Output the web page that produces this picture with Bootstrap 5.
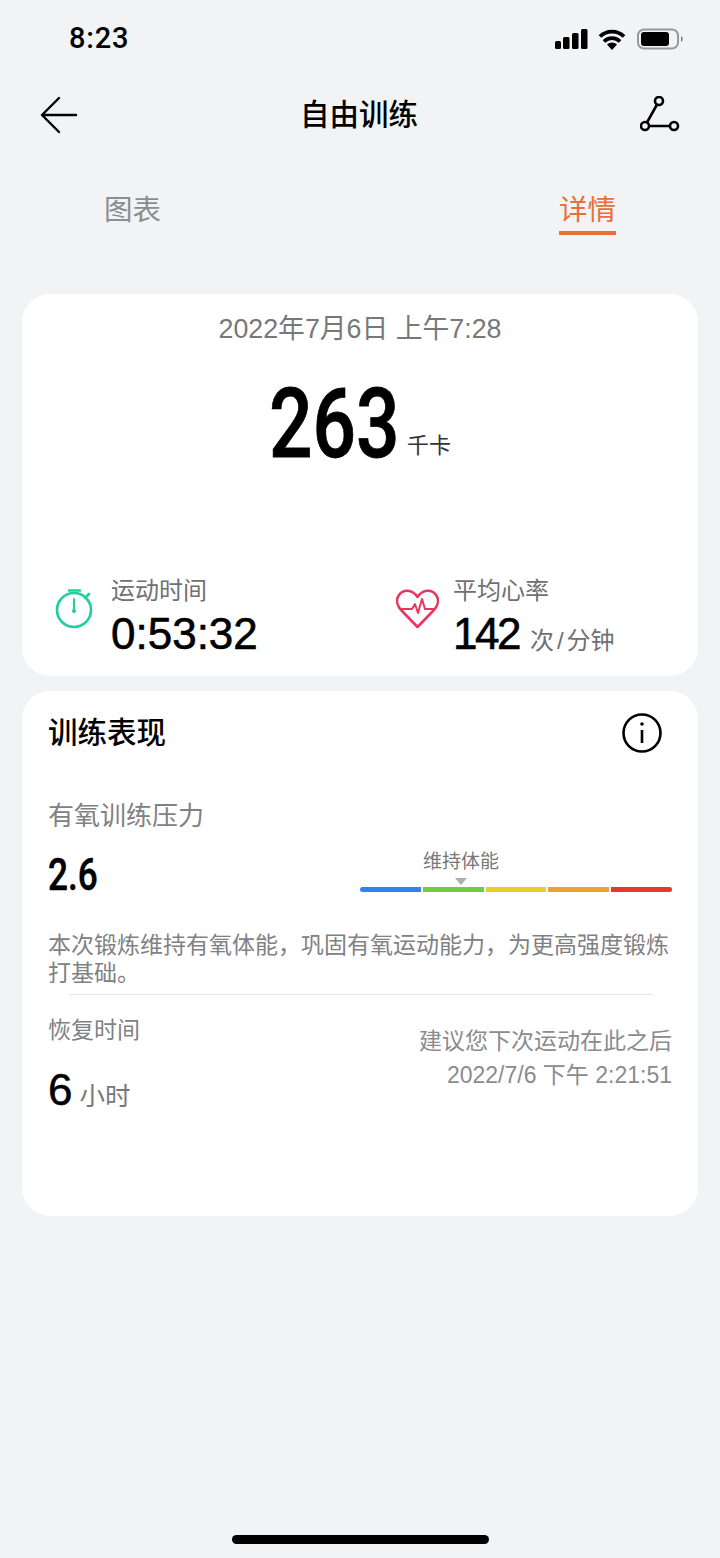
<!DOCTYPE html>
<html lang="zh-CN">
<head>
    <meta charset="UTF-8">
    <meta name="viewport" content="width=device-width, initial-scale=1.0">
    <title>自由训练</title>
    <link href="https://cdn.jsdelivr.net/npm/bootstrap@5.3.0/dist/css/bootstrap.min.css" rel="stylesheet">
    <style>
        body {
            background-color: #f1f3f5;
            font-family: "Liberation Sans", "Noto Sans CJK SC", sans-serif;
            color: #000;
            width: 720px;
            height: 1558px;
            overflow: hidden;
        }
        .status-row { height: 78px; padding: 0 36px 0 69px; }
        .status-time { font-size: 29px; font-weight: 500; letter-spacing: 0.8px; font-family: Roboto, sans-serif; }
        .title-row { height: 74px; padding: 0 40px; }
        .page-title { font-size: 29.500px; font-weight: 500; line-height: 1; }
        .tab-row { height: 68px; padding: 0 104px; margin-top: 38px; }
        .tab-link { font-size: 28.500px; line-height: 40px; color: #8c8d8f; display: block; }
        .tab-link.on { color: #e8703a; border-bottom: 4px solid #e8703a; padding-bottom: 1px; }
        .sheet { margin: 0 22px; background: #fff; border-radius: 28px; }
        .sheet-top { height: 382px; margin-top: 36px; padding-top: 17px; }
        .sheet-low { height: 525px; margin-top: 15px; padding: 22px 26px 0 26px; }
        .date-line { font-size: 26.800px; line-height: 36px; color: #77787a; }
        .big-row { margin-top: 27px; }
        .big-num { display: inline-block; width: 130px; font-family: Roboto, sans-serif; font-size: 97px; font-weight: 500; line-height: 100px; -webkit-text-stroke: .8px #000; transform: scaleX(.79); transform-origin: left center; }
        .big-unit { font-size: 22px; line-height: 24px; color: #333; margin: 0 0 16px 8px; }
        .stat-row { margin-top: 100px; padding-left: 32px; }
        .first-cell { width: 342px; flex-shrink: 0; gap: 17px; }
        .second-cell { gap: 14px; }
        .stat-ico { margin-top: 15px; }
        .stat-name { font-size: 24px; line-height: 34px; color: #6f7072; }
        .stat-val { height: 52px; font-size: 44px; line-height: 52px; -webkit-text-stroke: .6px #000; white-space: nowrap; }
        .tight-num { letter-spacing: -2.500px; }
        .stat-unit { font-weight: 400; font-size: 24px; color: #6f7072; margin-left: 11px; -webkit-text-stroke: 0; }
        .unit-slash { margin: 0 3px; }
        .low-title { font-size: 29.500px; font-weight: 500; line-height: 40px; }
        .grey-name { font-size: 26px; line-height: 36px; color: #808183; margin-top: 45px; }
        .press-row { margin-top: 15px; }
        .press-val { display: inline-block; width: 49px; font-family: Roboto, sans-serif; font-size: 44px; font-weight: 500; line-height: 50px; -webkit-text-stroke: .5px #000; transform: scaleX(.8); transform-origin: left center; }
        .scale-box { width: 312px; }
        .scale-lbl { font-size: 19px; line-height: 26px; color: #77787a; padding-left: 63px; }
        .scale-tri { width: 0; height: 0; border-left: 6px solid transparent; border-right: 6px solid transparent; border-top: 7px solid #aeaeae; margin: 3px 0 2px 95px; }
        .scale-bar { gap: 2px; height: 5px; }
        .scale-bar span { flex: 1; }
        .advice { font-size: 23px; line-height: 28px; color: #808183; margin-top: 31px; }
        .thin-rule { border-top: 1px solid #e6e6e6; margin: 7px 20px 0 21px; }
        .rec-row { margin-top: 19px; }
        .rec-name { font-size: 23px; line-height: 32px; color: #808183; }
        .rec-line { margin-top: 19px; }
        .rec-val { font-size: 44px; line-height: 50px; -webkit-text-stroke: .5px #000; }
        .rec-unit { font-size: 25.500px; color: #77787a; margin-left: 7px; }
        .rec-side { padding-top: 10px; }
        .rec-note { font-size: 23px; line-height: 34px; color: #8a8b8d; }
        .info-ico { margin-right: 10px; }
        .home-bar { width: 257px; height: 9px; border-radius: 5px; background: #000; margin: 319px auto 0; }
    </style>
</head>
<body>
    <!-- Status bar -->
    <div class="status-row d-flex justify-content-between align-items-center">
        <span class="status-time">8:23</span>
        <svg width="130" height="24" viewBox="0 0 130 24">
            <g fill="#000">
                <rect x="1" y="14" width="6" height="8" rx="1.500"/>
                <rect x="9" y="10" width="6.500" height="12" rx="1.500"/>
                <rect x="18" y="6" width="6.500" height="16" rx="1.500"/>
                <rect x="27" y="2" width="6.500" height="20" rx="1.500"/>
                <path d="M58 23l-5-5.500a7 7 0 0 1 10 0z"/>
            </g>
            <g fill="none" stroke="#000" stroke-width="3.800">
                <path d="M46 9.500a17 17 0 0 1 24 0"/>
                <path d="M50 14.500a11 11 0 0 1 16 0"/>
            </g>
            <rect x="84" y="2.500" width="40" height="19" rx="6" fill="none" stroke="#999" stroke-width="2"/>
            <rect x="87" y="5" width="28" height="14" rx="3" fill="#000"/>
            <path d="M127 9a3.500 3.500 0 0 1 0 6z" fill="#777"/>
        </svg>
    </div>

    <!-- Title row -->
    <div class="title-row d-flex justify-content-between align-items-center">
        <svg width="38" height="38" viewBox="0 0 38 38" fill="none" stroke="#000" stroke-width="2.400" stroke-linecap="round" stroke-linejoin="round">
            <path d="M19 2L2 19l17 17M2 19h34"/>
        </svg>
        <span class="page-title">自由训练</span>
        <svg width="40" height="38" viewBox="0 0 40 38" fill="none" stroke="#000" stroke-width="2.600">
            <circle cx="19" cy="5" r="4"/>
            <circle cx="5" cy="30" r="4"/>
            <circle cx="34" cy="30" r="4"/>
            <path d="M17 8.500L7 26.500M9 30h21"/>
        </svg>
    </div>

    <!-- Tabs -->
    <div class="tab-row d-flex justify-content-between align-items-start">
        <span class="tab-link">图表</span>
        <span class="tab-link on">详情</span>
    </div>

    <!-- Summary card -->
    <div class="sheet sheet-top">
        <div class="date-line text-center">2022年7月6日 上午7:28</div>
        <div class="big-row d-flex justify-content-center align-items-end">
            <span class="big-num">263</span><span class="big-unit">千卡</span>
        </div>
        <div class="stat-row d-flex">
            <div class="first-cell d-flex align-items-start">
                <svg class="stat-ico" width="40" height="42" viewBox="0 0 40 42" fill="none" stroke="#1fcf9f" stroke-width="2.600" stroke-linecap="round">
                    <circle cx="20" cy="21" r="17"/>
                    <path d="M15 1.500h11M31 9l4-4"/>
                    <path d="M20 10v11" stroke-width="2"/>
                    <circle cx="20" cy="22" r="2" fill="#1fcf9f" stroke="none"/>
                </svg>
                <div>
                    <div class="stat-name">运动时间</div>
                    <div class="stat-val">0:53:32</div>
                </div>
            </div>
            <div class="second-cell d-flex align-items-start">
                <svg class="stat-ico" width="43" height="40" viewBox="0 0 43 40" fill="none" stroke="#e8375f" stroke-width="2.600" stroke-linejoin="round">
                    <path d="M21.500 38L6 22C0 16 0 10 3 6C7 0 16 0 21.500 8C27 0 36 0 40 6C43 10 43 16 37 22Z"/>
                    <path d="M3 20h13l3-5 3 9 4-14 3 10h11" stroke-width="2"/>
                </svg>
                <div>
                    <div class="stat-name">平均心率</div>
                    <div class="stat-val"><span class="tight-num">142</span><span class="stat-unit">次<span class="unit-slash">/</span>分钟</span></div>
                </div>
            </div>
        </div>
    </div>

    <!-- Training performance card -->
    <div class="sheet sheet-low">
        <div class="d-flex justify-content-between align-items-center">
            <span class="low-title">训练表现</span>
            <svg class="info-ico" width="40" height="40" viewBox="0 0 40 40" fill="none" stroke="#000" stroke-width="2.600">
                <circle cx="20" cy="20" r="18.500"/>
                <path d="M20 17v13"/>
                <circle cx="20" cy="11" r="1.800" fill="#000" stroke="none"/>
            </svg>
        </div>
        <div class="grey-name">有氧训练压力</div>
        <div class="press-row d-flex justify-content-between align-items-end">
            <span class="press-val">2.6</span>
            <div class="scale-box mb-2">
                <div class="scale-lbl">维持体能</div>
                <div class="scale-tri"></div>
                <div class="scale-bar d-flex">
                    <span class="rounded-start" style="background:#2f86e8"></span>
                    <span style="background:#6bcf3f"></span>
                    <span style="background:#e4cf2c"></span>
                    <span style="background:#eea033"></span>
                    <span class="rounded-end" style="background:#e53a26"></span>
                </div>
            </div>
        </div>
        <div class="advice">本次锻炼维持有氧体能，巩固有氧运动能力，为更高强度锻炼打基础。</div>
        <div class="thin-rule"></div>
        <div class="rec-row d-flex justify-content-between">
            <div>
                <div class="rec-name">恢复时间</div>
                <div class="rec-line"><span class="rec-val">6</span><span class="rec-unit">小时</span></div>
            </div>
            <div class="rec-side text-end">
                <div class="rec-note">建议您下次运动在此之后</div>
                <div class="rec-note">2022/7/6 下午 2:21:51</div>
            </div>
        </div>
    </div>

    <div class="home-bar"></div>

    <script src="https://cdn.jsdelivr.net/npm/bootstrap@5.3.0/dist/js/bootstrap.bundle.min.js"></script>
</body>
</html>
